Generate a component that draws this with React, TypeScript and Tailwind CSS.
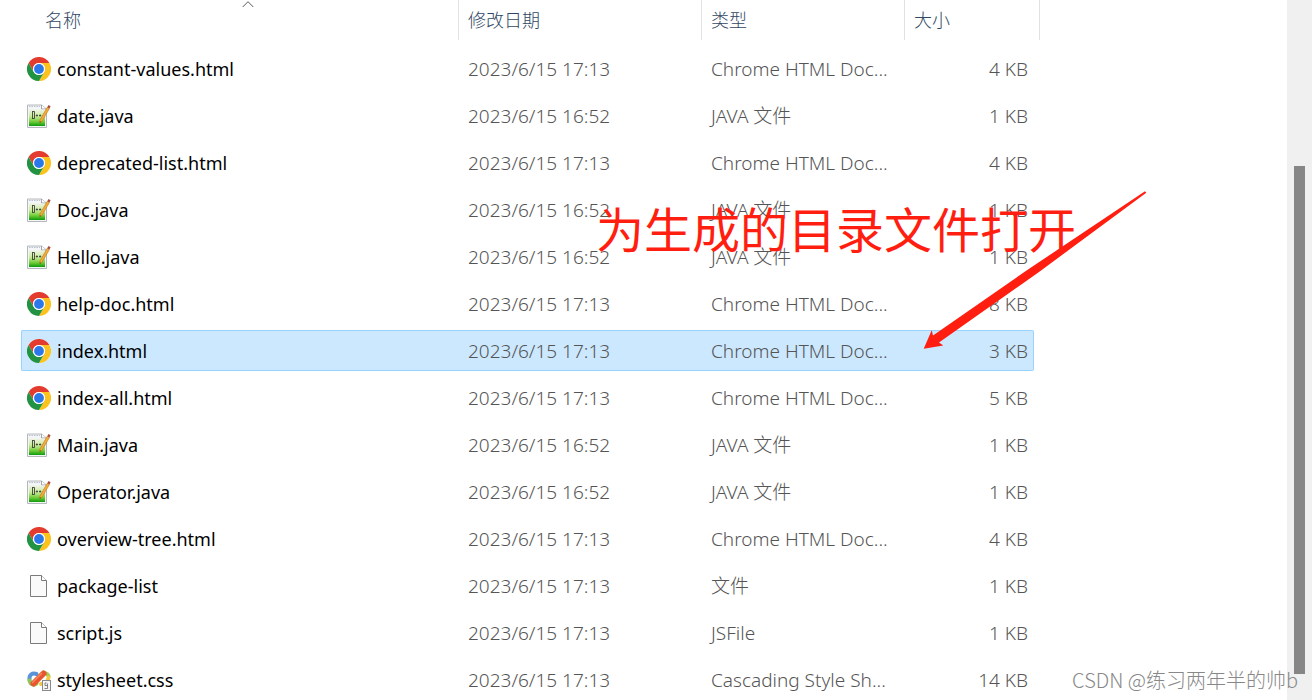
import React from 'react'

type FileKind = 'chrome' | 'java' | 'blank' | 'css'

interface FileEntry {
  name: string
  modified: string
  type: string
  size: string
  kind: FileKind
}

const files: FileEntry[] = [
  { name: 'constant-values.html', modified: '2023/6/15 17:13', type: 'Chrome HTML Doc...', size: '4 KB', kind: 'chrome' },
  { name: 'date.java', modified: '2023/6/15 16:52', type: 'JAVA 文件', size: '1 KB', kind: 'java' },
  { name: 'deprecated-list.html', modified: '2023/6/15 17:13', type: 'Chrome HTML Doc...', size: '4 KB', kind: 'chrome' },
  { name: 'Doc.java', modified: '2023/6/15 16:52', type: 'JAVA 文件', size: '1 KB', kind: 'java' },
  { name: 'Hello.java', modified: '2023/6/15 16:52', type: 'JAVA 文件', size: '1 KB', kind: 'java' },
  { name: 'help-doc.html', modified: '2023/6/15 17:13', type: 'Chrome HTML Doc...', size: '8 KB', kind: 'chrome' },
  { name: 'index.html', modified: '2023/6/15 17:13', type: 'Chrome HTML Doc...', size: '3 KB', kind: 'chrome' },
  { name: 'index-all.html', modified: '2023/6/15 17:13', type: 'Chrome HTML Doc...', size: '5 KB', kind: 'chrome' },
  { name: 'Main.java', modified: '2023/6/15 16:52', type: 'JAVA 文件', size: '1 KB', kind: 'java' },
  { name: 'Operator.java', modified: '2023/6/15 16:52', type: 'JAVA 文件', size: '1 KB', kind: 'java' },
  { name: 'overview-tree.html', modified: '2023/6/15 17:13', type: 'Chrome HTML Doc...', size: '4 KB', kind: 'chrome' },
  { name: 'package-list', modified: '2023/6/15 17:13', type: '文件', size: '1 KB', kind: 'blank' },
  { name: 'script.js', modified: '2023/6/15 17:13', type: 'JSFile', size: '1 KB', kind: 'blank' },
  { name: 'stylesheet.css', modified: '2023/6/15 17:13', type: 'Cascading Style Sh...', size: '14 KB', kind: 'css' },
]

const selectedName = 'index.html'

const ChromeIcon = () => (
  <svg viewBox="0 0 48 48" className="w-6 h-6 shrink-0" aria-hidden="true">
    <circle cx="24" cy="24" r="24" fill="#fff" />
    <path d="M3.2 12A24 24 0 0 1 44.8 12H24A12 12 0 0 0 13.6 30Z" fill="#e33b2e" />
    <path d="M44.8 12A24 24 0 0 1 24 48L34.4 30A12 12 0 0 0 24 12Z" fill="#fcc31e" />
    <path d="M24 48A24 24 0 0 1 3.2 12L13.6 30A12 12 0 0 0 34.4 30Z" fill="#229342" />
    <circle cx="24" cy="24" r="12" fill="#fff" />
    <circle cx="24" cy="24" r="9.8" fill="#2b78ea" />
  </svg>
)

const JavaIcon = () => (
  <svg viewBox="0 0 24 24" className="w-6 h-6 shrink-0" aria-hidden="true">
    <defs>
      <linearGradient id="java-green" x1="0" y1="0" x2="0" y2="1">
        <stop offset="0" stopColor="#eef3e6" />
        <stop offset="0.4" stopColor="#cdeb9c" />
        <stop offset="0.75" stopColor="#6ccb34" />
        <stop offset="1" stopColor="#0c9a0c" />
      </linearGradient>
    </defs>
    <path d="M0.5 1H14.5L19.5 5V23.5H0.5Z" fill="#f4f5f7" stroke="#b4b8bd" />
    <path d="M14.5 1V5H19" fill="#fff" stroke="#8e9297" strokeWidth="0.8" />
    <path d="M2 2.5H13" stroke="#b8c2d2" strokeDasharray="1.5 1" />
    <rect x="2" y="5.5" width="16" height="16.5" fill="url(#java-green)" />
    <path d="M5.5 7V15M5.5 7.5H7.5V14.5H5.5" fill="none" stroke="#3a4433" strokeWidth="0.9" />
    <path d="M8.8 11.5H11M12 11.5H14.2M9.9 10.4V12.6M13.1 10.4V12.6" stroke="#3a4433" strokeWidth="0.9" />
    <path d="M20.3 3.2L22.4 4.6L14.9 17.4L12.8 18.6L12.9 16.1Z" fill="#f2ac3a" stroke="#bf7712" strokeWidth="0.6" />
    <path d="M20.3 3.2L21.5 1L23.6 2.3L22.4 4.6Z" fill="#a84a3e" />
    <path d="M12.9 17.2L12.7 18.8L14 18Z" fill="#333" />
  </svg>
)

const BlankIcon = () => (
  <svg viewBox="0 0 24 24" className="w-6 h-6 shrink-0" aria-hidden="true">
    <path d="M3.5 1.5H14.5L19.5 6.5V22.5H3.5Z" fill="#fafafa" stroke="#7b7b7b" />
    <path d="M14.5 1.5V6.5H19.5" fill="#fff" stroke="#7b7b7b" />
  </svg>
)

const CssIcon = () => (
  <svg viewBox="0 0 24 24" className="w-6 h-6 shrink-0" aria-hidden="true">
    <g fill="none" strokeLinecap="round">
      <path d="M2.5 11.5C2 7 5 4.5 9.5 6" stroke="#5b93d8" strokeWidth="4" />
      <path d="M2.5 12.5C4 17 7 17.5 9.5 15.5" stroke="#8fc45a" strokeWidth="4" />
      <path d="M14.5 6.5C17 4 20.5 5 21.5 8" stroke="#a3cc5c" strokeWidth="4" />
      <path d="M21.5 9.5C21.5 13 18.5 16 14 16" stroke="#f3c63f" strokeWidth="4" />
      <path d="M6.5 15.5L16.5 5.5" stroke="#e9552f" strokeWidth="6" />
      <path d="M5.5 14.5L14.5 5.5" stroke="#f58a5c" strokeWidth="1.5" />
    </g>
    <rect x="15.5" y="12.5" width="8" height="10" fill="#f4f4f4" stroke="#8a8a8a" />
    <path d="M19.5 15H18V17.5H20.5V20.5H17.5M20.5 15.5V18" fill="none" stroke="#777" strokeWidth="0.9" />
  </svg>
)

const icons: Record<FileKind, React.FC> = {
  chrome: ChromeIcon,
  java: JavaIcon,
  blank: BlankIcon,
  css: CssIcon,
}

const FileRow: React.FC<{ file: FileEntry; selected: boolean }> = ({ file, selected }) => {
  const Icon = icons[file.kind]
  const fill = selected ? 'bg-[#cce8ff] border-[#99d1ff]' : 'border-transparent'

  return (
    <tr aria-selected={selected} className="text-[#555]">
      <td className="p-0 py-[3px]">
        <div className={`flex items-center gap-1.5 h-[41px] pl-[5px] border-y border-l rounded-l-xs text-lg font-normal text-black ${fill}`}>
          <Icon />
          <span>{file.name}</span>
        </div>
      </td>
      <td className="p-0 py-[3px]">
        <div className={`flex items-center h-[41px] pl-[9px] border-y ${fill}`}>{file.modified}</div>
      </td>
      <td className="p-0 py-[3px]">
        <div className={`flex items-center h-[41px] pl-[9px] border-y ${fill}`}>{file.type}</div>
      </td>
      <td className="p-0 py-[3px]">
        <div className={`flex items-center justify-end h-[41px] mr-1.5 pr-[5px] border-y border-r rounded-r-xs ${fill}`}>
          {file.size}
        </div>
      </td>
    </tr>
  )
}

const columnHead = 'p-0 pb-[5px] font-light text-left text-lg'
const columnLabel = 'flex items-center h-10 border-r border-[#e2e2e2]'

const App: React.FC = () => {
  return (
    <div className="relative flex h-screen overflow-hidden bg-white font-['Noto_Sans','Noto_Sans_CJK_SC',sans-serif] text-[19px] leading-7 whitespace-nowrap">
      <main className="flex-1 pl-[21px]">
        <table className="table-fixed border-separate border-spacing-0 w-[1019px] font-light">
          <colgroup>
            <col className="w-[438px]" />
            <col className="w-[243px]" />
            <col className="w-[203px]" />
            <col className="w-[135px]" />
          </colgroup>
          <thead className="text-[#304763]">
            <tr>
              <th className={columnHead} aria-sort="ascending">
                <div className={`relative pl-6 ${columnLabel}`}>
                  名称
                  <svg viewBox="0 0 12 7" className="absolute top-0 left-[221px] w-3 h-[7px]" aria-hidden="true">
                    <path d="M0.7 7L6 1.7L11.3 7" fill="none" stroke="#5a5a5a" />
                  </svg>
                </div>
              </th>
              <th className={columnHead}>
                <div className={`pl-[9px] ${columnLabel}`}>修改日期</div>
              </th>
              <th className={columnHead}>
                <div className={`pl-[9px] ${columnLabel}`}>类型</div>
              </th>
              <th className={columnHead}>
                <div className={`pl-[9px] ${columnLabel}`}>大小</div>
              </th>
            </tr>
          </thead>
          <tbody>
            {files.map(file => (
              <FileRow key={file.name} file={file} selected={file.name === selectedName} />
            ))}
          </tbody>
        </table>
      </main>

      {/* Scrollbar */}
      <aside className="flex justify-center w-[25px] pt-[166px] pb-[26px] bg-[#f0f0f0]">
        <div className="w-[11px] bg-[#868686]" />
      </aside>

      {/* Note and arrow over the list */}
      <p className="absolute top-[194px] left-[596px] text-5xl leading-[72px] text-[#ff1e10]">为生成的目录文件打开</p>
      <svg viewBox="0 0 224 160" className="absolute top-[190px] left-[923px] w-[224px] h-[160px]" aria-hidden="true">
        <path d="M222 1.3L105 79.5L10 145.5L8.7 140.3L0.7 158.8L20.3 155.5L16 152.5L116 82L223.3 2.7Z" fill="#ff1e10" />
      </svg>

      <p className="absolute right-3.5 bottom-1.5 text-xl leading-7 font-light text-[#888] font-['Noto_Sans_CJK_SC',sans-serif]">
        CSDN @练习两年半的帅b
      </p>
    </div>
  )
}

export default App
